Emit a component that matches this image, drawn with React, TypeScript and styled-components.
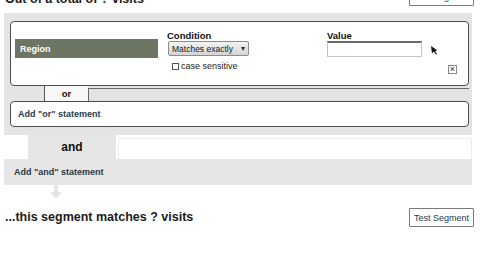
import styled, { createGlobalStyle } from "styled-components";

const GlobalStyle = createGlobalStyle`
  html, body {
    margin: 0;
    padding: 0;
    background: #ffffff;
  }
  body {
    font-family: "Liberation Sans", Arial, sans-serif;
  }
  #root {
    width: 480px;
    height: 270px;
    overflow: hidden;
  }
`;

const InkText = "#263a48";

export default function App() {
  return (
    <>
      <GlobalStyle />
      <Page>
        <TopRow>
          <Heading>Out of a total of ? visits</Heading>
          <TestButton>Test Segment</TestButton>
        </TopRow>

        <Panel>
          <ConditionBox>
            <RegionBar>Region</RegionBar>
            <Column $width={160}>
              <Label>Condition</Label>
              <Select>
                Matches exactly <Caret>▾</Caret>
              </Select>
              <CheckRow>
                <CheckBox />
                case sensitive
              </CheckRow>
            </Column>
            <Column $width={103}>
              <Label>Value</Label>
              <ValueInput />
            </Column>
            <Tools>
              <svg width="9" height="10" viewBox="0 0 9 10">
                <path d="M1 1 L7.5 5.5 L5 6 L7 9 L5.8 9.6 L3.9 6.6 L2 8.4 Z" fill="#111" />
              </svg>
              <RemoveButton>×</RemoveButton>
            </Tools>
          </ConditionBox>

          <OrRow>
            <OrStub />
            <OrTab>or</OrTab>
            <OrRest />
          </OrRow>

          <AddBox>
            <LinkText>Add "or" statement</LinkText>
          </AddBox>
        </Panel>

        <AndRow>
          <AndGap />
          <AndTab>and</AndTab>
          <AndRest />
        </AndRow>
        <AndBar>
          <LinkText>Add "and" statement</LinkText>
        </AndBar>

        <ArrowWrap>
          <svg width="14" height="14" viewBox="0 0 14 14">
            <path d="M5 0 H9 V7 H13 L7 13 L1 7 H5 Z" fill="#e4e4e4" />
          </svg>
        </ArrowWrap>

        <Footer>
          <Heading>...this segment matches ? visits</Heading>
          <TestButton>Test Segment</TestButton>
        </Footer>
      </Page>
    </>
  );
}

const Page = styled.div`
  display: flex;
  flex-direction: column;
`;

const TopRow = styled.div`
  display: flex;
  justify-content: space-between;
  align-items: flex-end;
  height: 19px;
  margin-top: -13px;
  margin-bottom: 7px;
  padding: 0 6px 0 5px;
`;

const Heading = styled.div`
  font-size: 12.5px;
  font-weight: bold;
  line-height: 13px;
  color: #1c1c1c;
`;

const TestButton = styled.button`
  box-sizing: border-box;
  width: 65px;
  height: 19px;
  padding: 0;
  border: 1px solid #7a7a7a;
  border-radius: 1px;
  background: #ffffff;
  font-family: "Liberation Sans", Arial, sans-serif;
  font-size: 9px;
  color: ${InkText};
`;

const Panel = styled.div`
  background: #e4e4e4;
  margin: 0 8px 0 4px;
  padding: 8px 3px 8px 6px;
`;

const ConditionBox = styled.div`
  box-sizing: border-box;
  height: 65px;
  display: flex;
  align-items: flex-start;
  padding: 8px 0 0 4px;
  background: #ffffff;
  border: 1px solid #4d4d4d;
  border-radius: 4px;
`;

const RegionBar = styled.div`
  box-sizing: border-box;
  width: 143px;
  height: 19px;
  margin-top: 9px;
  margin-right: 9px;
  padding-left: 5px;
  display: flex;
  align-items: center;
  background: #6d7563;
  color: #ffffff;
  font-size: 9px;
  font-weight: bold;
`;

const Column = styled.div<{ $width: number }>`
  width: ${(p) => p.$width}px;
  display: flex;
  flex-direction: column;
  align-items: flex-start;
`;

const Label = styled.div`
  font-size: 9.5px;
  font-weight: bold;
  line-height: 11px;
  color: #111;
`;

const Select = styled.div`
  box-sizing: border-box;
  width: 81px;
  height: 15px;
  margin-left: 1px;
  padding: 0 3px;
  display: flex;
  align-items: center;
  justify-content: space-between;
  border: 1px solid #8c8c8c;
  border-radius: 2px;
  background: linear-gradient(#f2f2f2, #d4d4d4);
  font-size: 8.5px;
  color: #222;
`;

const Caret = styled.span`
  font-size: 8px;
  color: #333;
`;

const CheckRow = styled.div`
  display: flex;
  align-items: center;
  gap: 2px;
  margin: 5px 0 0 5px;
  font-size: 9px;
  color: #222;
`;

const CheckBox = styled.span`
  box-sizing: border-box;
  width: 7px;
  height: 7px;
  border: 1px solid #555;
  background: #fff;
`;

const ValueInput = styled.div`
  box-sizing: border-box;
  width: 95px;
  height: 16px;
  border: 1px solid #c4c4c4;
  border-top: 2px solid #6a6a6a;
  background: #fff;
`;

const Tools = styled.div`
  display: flex;
  flex-direction: column;
  align-items: flex-start;
  margin-top: 15px;
`;

const RemoveButton = styled.div`
  box-sizing: border-box;
  width: 9px;
  height: 9px;
  margin: 10px 0 0 18px;
  display: flex;
  align-items: center;
  justify-content: center;
  border: 1px solid #888;
  font-size: 9px;
  line-height: 1;
  color: #222;
`;

const OrRow = styled.div`
  display: flex;
  height: 15px;
`;

const OrStub = styled.div`
  width: 34px;
  border-right: 1px solid #555;
`;

const OrTab = styled.div`
  width: 43px;
  display: flex;
  align-items: center;
  justify-content: center;
  background: #f7f7f7;
  font-size: 9.5px;
  font-weight: bold;
  color: #111;
`;

const OrRest = styled.div`
  flex: 1;
  margin-top: 2px;
  border-top: 1px solid #6a6a6a;
  border-left: 1px solid #6a6a6a;
  background: #e2e2e2;
`;

const AddBox = styled.div`
  box-sizing: border-box;
  height: 26px;
  display: flex;
  align-items: center;
  padding-left: 7px;
  background: #ffffff;
  border: 1px solid #4d4d4d;
  border-radius: 4px;
`;

const LinkText = styled.span`
  font-size: 9px;
  font-weight: bold;
  color: ${InkText};
`;

const AndRow = styled.div`
  display: flex;
  height: 24px;
  margin: 0 8px 0 4px;
`;

const AndGap = styled.div`
  width: 24px;
`;

const AndTab = styled.div`
  width: 88px;
  display: flex;
  align-items: center;
  justify-content: center;
  background: #e6e6e6;
  font-size: 12px;
  font-weight: bold;
  color: #111;
`;

const AndRest = styled.div`
  flex: 1;
  margin: 3px 0 0 2px;
  border: 1px solid #ececec;
  border-bottom: none;
  border-radius: 3px 3px 0 0;
`;

const AndBar = styled.div`
  height: 26px;
  display: flex;
  align-items: center;
  margin: 0 8px 0 4px;
  padding-left: 10px;
  background: #e6e6e6;
`;

const ArrowWrap = styled.div`
  height: 14px;
  padding-left: 49px;
`;

const Footer = styled.div`
  display: flex;
  justify-content: space-between;
  align-items: center;
  margin-top: 9px;
  padding: 0 6px 0 5px;
`;
